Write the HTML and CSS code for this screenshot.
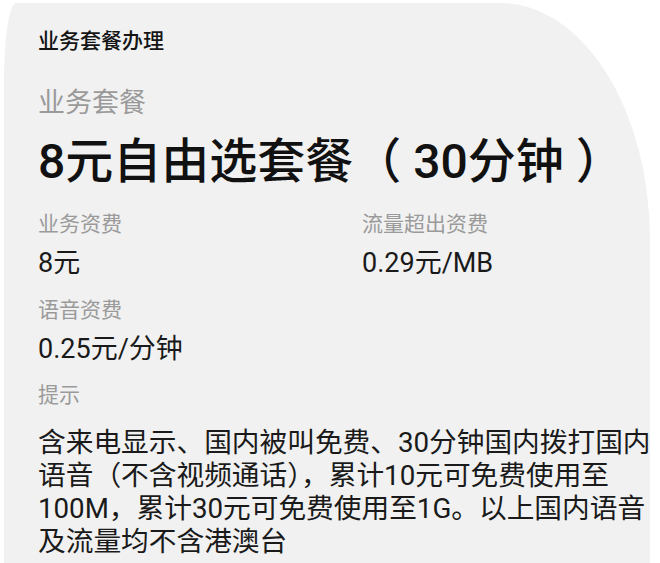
FILE: index.html
```html
<!DOCTYPE html>
<html lang="zh-CN">
<head>
<meta charset="utf-8">
<title>业务套餐办理</title>
<link rel="stylesheet" href="styles.css">
</head>
<body>
<div class="card">
  <div class="header">业务套餐办理</div>
  <div class="section-label">业务套餐</div>
  <div class="title">8元自由选套餐（ 30分钟 ）</div>
  <div class="grid">
    <div class="item">
      <div class="label">业务资费</div>
      <div class="value">8元</div>
    </div>
    <div class="item">
      <div class="label">流量超出资费</div>
      <div class="value">0.29元/MB</div>
    </div>
    <div class="item">
      <div class="label">语音资费</div>
      <div class="value">0.25元/分钟</div>
    </div>
  </div>
  <div class="label tip-label">提示</div>
  <div class="tip">
    <span class="line">含来电显示、国内被叫免费、30分钟国内拨打国内</span>
    <span class="line">语音（不含视频通话），累计10元可免费使用至</span>
    <span class="line">100M，累计30元可免费使用至1G。以上国内语音</span>
    <span class="line">及流量均不含港澳台</span>
  </div>
</div>
</body>
</html>
```

FILE: styles.css
```css
html, body {
  margin: 0;
  padding: 0;
  background: #ffffff;
  height: 563px;
  overflow: hidden;
}

body {
  font-family: Roboto, "Noto Sans CJK SC", "Noto Sans", sans-serif;
  color: #1a1a1a;
}

.card {
  margin: 3px 10px 0 4px;
  height: 560px;
  background: #f1f1f1;
  border-radius: 12px 150px 0 0 / 78px 237px 0 0;
  padding: 26px 0 0 34px;
  box-sizing: border-box;
}

.header {
  font-size: 21px;
  font-weight: 500;
  line-height: 24px;
  color: #151515;
}

.section-label {
  margin-top: 34px;
  font-size: 27px;
  line-height: 32px;
  color: #9a9a9a;
}

.title {
  margin-top: 15px;
  font-size: 48px;
  font-weight: 500;
  line-height: 56px;
  color: #111111;
  white-space: nowrap;
}

.grid {
  margin-top: 20px;
  display: grid;
  grid-template-columns: 324px 1fr;
  row-gap: 16px;
}

.label {
  font-size: 21px;
  line-height: 28px;
  color: #9a9a9a;
}

.value {
  margin-top: 8px;
  font-size: 27px;
  line-height: 34px;
  color: #1a1a1a;
}

.tip-label {
  margin-top: 15px;
}

.tip {
  margin-top: 17px;
  font-size: 27.7px;
  line-height: 33px;
  color: #1a1a1a;
}

.line {
  display: block;
  white-space: nowrap;
}
```
